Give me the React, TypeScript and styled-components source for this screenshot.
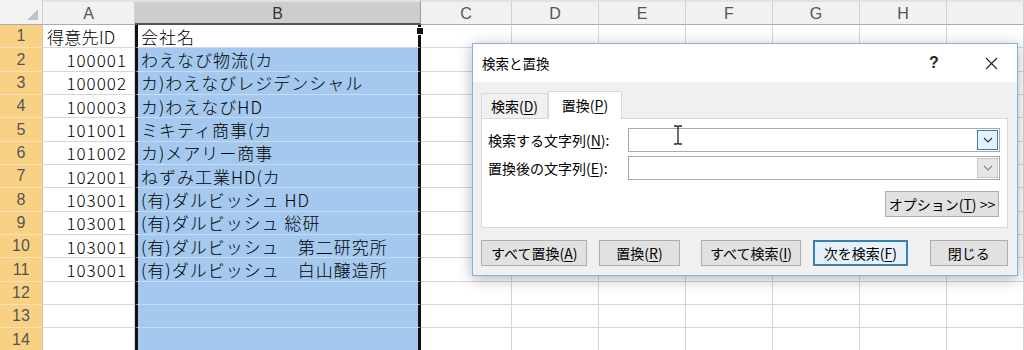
import React from 'react';
import styled, { createGlobalStyle } from 'styled-components';

const GlobalStyle = createGlobalStyle`
  html, body {
    margin: 0;
    padding: 0;
    background: #fff;
    overflow: hidden;
  }
`;

const COLS = ['A', 'B', 'C', 'D', 'E', 'F', 'G', 'H', ''];

const DATA: [string, string][] = [
  ['得意先ID', '会社名'],
  ['100001', 'わえなび物流(カ'],
  ['100002', 'カ)わえなびレジデンシャル'],
  ['100003', 'カ)わえなびHD'],
  ['101001', 'ミキティ商事(カ'],
  ['101002', 'カ)メアリー商事'],
  ['102001', 'ねずみ工業HD(カ'],
  ['103001', '(有)ダルビッシュ HD'],
  ['103001', '(有)ダルビッシュ 総研'],
  ['103001', '(有)ダルビッシュ　第二研究所'],
  ['103001', '(有)ダルビッシュ　白山醸造所'],
  ['', ''],
  ['', ''],
  ['', ''],
];

export default function App() {
  return (
    <Page>
      <GlobalStyle />
      <Sheet>
        <Corner />
        {COLS.map((c, i) => (
          <ColHead key={'h' + i} $sel={c === 'B'}>{c}</ColHead>
        ))}
        {DATA.map(([a, b], r) => (
          <React.Fragment key={r}>
            <RowHead>{r + 1}</RowHead>
            <Cell $right={r > 0}>{a}</Cell>
            <BCell $active={r === 0}>
              {b}
              {r === 0 && <FillHandle />}
            </BCell>
            {COLS.slice(2).map((_, i) => (
              <Cell key={i} />
            ))}
          </React.Fragment>
        ))}
      </Sheet>

      <Dialog>
        <TitleBar>
          <Title>検索と置換</Title>
          <TitleBtn $w={46}>?</TitleBtn>
          <TitleBtn $w={52} style={{ marginLeft: 8 }}>
            <svg width="13" height="13" viewBox="0 0 13 13">
              <path d="M1 1 L12 12 M12 1 L1 12" stroke="#222" strokeWidth="1.1" fill="none" />
            </svg>
          </TitleBtn>
        </TitleBar>

        <Body>
          <Tabs>
            <Tab $w={67}>検索(<u>D</u>)</Tab>
            <Tab $w={74} $active>置換(<u>P</u>)</Tab>
          </Tabs>
          <Panel>
            <Field>
              <Label>検索する文字列(<u>N</u>):</Label>
              <Input>
                <IBeam width="10" height="20" viewBox="0 0 10 20">
                  <path d="M1 1 H4 Q5 1 5 3 V17 Q5 19 4 19 H1 M9 1 H6 Q5 1 5 3 M5 17 Q5 19 6 19 H9" stroke="#222" strokeWidth="1.3" fill="none" />
                </IBeam>
                <Drop $focus>
                  <Chevron color="#333" />
                </Drop>
              </Input>
            </Field>
            <Field>
              <Label>置換後の文字列(<u>E</u>):</Label>
              <Input>
                <Drop>
                  <Chevron color="#8a8a8a" />
                </Drop>
              </Input>
            </Field>
            <OptionRow>
              <Button $w={114}>オプション(<u>T</u>) &gt;&gt;</Button>
            </OptionRow>
          </Panel>
          <ButtonRow>
            <Button $w={107}>すべて置換(<u>A</u>)</Button>
            <Button $w={81} $ml={12}>置換(<u>R</u>)</Button>
            <Button $w={101} $ml={21}>すべて検索(<u>I</u>)</Button>
            <Button $w={95} $ml={12} $default>次を検索(<u>F</u>)</Button>
            <Button $w={79} $ml={22}>閉じる</Button>
          </ButtonRow>
        </Body>
      </Dialog>
    </Page>
  );
}

function Chevron({ color }: { color: string }) {
  return (
    <svg width="10" height="6" viewBox="0 0 10 6">
      <path d="M1 1 L5 5 L9 1" stroke={color} strokeWidth="1.2" fill="none" />
    </svg>
  );
}

const Page = styled.div`
  position: relative;
  width: 1024px;
  height: 350px;
  overflow: hidden;
`;

const Sheet = styled.div`
  display: grid;
  grid-template-columns: 43px 92px 286px 91px 87px 87px 87px 87px 87px 1fr;
  grid-template-rows: 25px repeat(14, 23.35px);
  width: 1024px;
  font-family: 'Noto Sans CJK JP', sans-serif;
`;

const Corner = styled.div`
  position: relative;
  box-sizing: border-box;
  background: #f3f3f3;
  border-right: 1px solid #cfcfcf;
  border-bottom: 1px solid #ababab;

  &::after {
    content: '';
    position: absolute;
    right: 4px;
    bottom: 4px;
    border-left: 11px solid transparent;
    border-bottom: 11px solid #c4c4c4;
  }
`;

const ColHead = styled.div<{ $sel?: boolean }>`
  box-sizing: border-box;
  display: flex;
  align-items: center;
  justify-content: center;
  padding-top: 2px;
  font-family: 'Liberation Sans', sans-serif;
  font-size: 16px;
  color: ${({ $sel }) => ($sel ? '#333' : '#555')};
  background: ${({ $sel }) => ($sel ? '#cdcdcd' : '#f1f1f1')};
  border-right: 1px solid ${({ $sel }) => ($sel ? '#9a9a9a' : '#d2d2d2')};
  border-bottom: ${({ $sel }) => ($sel ? '2px solid #555' : '1px solid #ababab')};
  border-top: 2px solid #e2e2e2;
`;

const RowHead = styled.div`
  box-sizing: border-box;
  display: flex;
  align-items: center;
  justify-content: center;
  font-family: 'Liberation Sans', sans-serif;
  font-size: 16px;
  color: #555;
  background: #f9d185;
  border-right: 1px solid #c9c9c9;
  border-bottom: 1px solid #f6e2b8;
`;

const Cell = styled.div<{ $right?: boolean }>`
  box-sizing: border-box;
  display: flex;
  align-items: center;
  justify-content: ${({ $right }) => ($right ? 'flex-end' : 'flex-start')};
  padding: 0 7px 0 4px;
  font-size: 17px;
  font-weight: 300;
  letter-spacing: ${({ $right }) => ($right ? 1 : 0.3)}px;
  color: #000;
  white-space: nowrap;
  border-right: 1px solid #d6d6d6;
  border-bottom: 1px solid #d6d6d6;
`;

const BCell = styled.div<{ $active?: boolean }>`
  position: relative;
  box-sizing: border-box;
  display: flex;
  align-items: center;
  padding-left: 3px;
  font-size: 17px;
  font-weight: 300;
  letter-spacing: 1px;
  color: #000;
  white-space: nowrap;
  background: ${({ $active }) => ($active ? '#fff' : '#a4c8ee')};
  border-left: 3px solid #111;
  border-right: 3px solid #111;
  border-bottom: 1px solid ${({ $active }) => ($active ? '#d6d6d6' : '#c6dcf4')};
`;

const FillHandle = styled.span`
  position: absolute;
  right: -6px;
  top: 2px;
  width: 6px;
  height: 6px;
  background: #111;
  border: 1px solid #fff;
`;

const Dialog = styled.div`
  position: absolute;
  left: 472px;
  top: 43px;
  width: 546px;
  height: 233px;
  box-sizing: border-box;
  display: flex;
  flex-direction: column;
  background: #f0f0f0;
  border: 1px solid #86b1df;
  box-shadow: 0 3px 14px rgba(0, 0, 0, 0.3);
  font-family: 'Noto Sans CJK JP', sans-serif;
  font-size: 14px;
  color: #000;

  u {
    text-decoration-thickness: 1px;
    text-underline-offset: 2px;
  }
`;

const TitleBar = styled.div`
  height: 38px;
  display: flex;
  align-items: center;
  padding-left: 9px;
  background: #fff;
`;

const Title = styled.span`
  flex: 1;
  font-size: 13.5px;
`;

const TitleBtn = styled.span<{ $w: number }>`
  width: ${({ $w }) => $w}px;
  height: 100%;
  display: flex;
  align-items: center;
  justify-content: center;
  font-family: 'Liberation Sans', sans-serif;
  font-size: 16px;
  font-weight: bold;
  color: #222;
`;

const Body = styled.div`
  padding: 9px 9px 0 8px;
`;

const Tabs = styled.div`
  display: flex;
  align-items: flex-end;
  height: 27px;
`;

const Tab = styled.div<{ $w: number; $active?: boolean }>`
  position: relative;
  z-index: ${({ $active }) => ($active ? 1 : 0)};
  box-sizing: border-box;
  width: ${({ $w }) => $w}px;
  height: ${({ $active }) => ($active ? 28 : 25)}px;
  margin-bottom: ${({ $active }) => ($active ? -1 : 0)}px;
  display: flex;
  align-items: center;
  justify-content: center;
  padding-bottom: ${({ $active }) => ($active ? 2 : 0)}px;
  background: ${({ $active }) => ($active ? '#fff' : '#f0f0f0')};
  border: 1px solid #d9d9d9;
  border-bottom: none;
`;

const Panel = styled.div`
  box-sizing: border-box;
  height: 110px;
  display: flex;
  flex-direction: column;
  gap: 4px;
  padding: 9px 7px 0 6px;
  background: #fff;
  border: 1px solid #d9d9d9;
`;

const Field = styled.div`
  display: flex;
  align-items: center;
  height: 24px;
`;

const Label = styled.span`
  width: 140px;
  white-space: nowrap;
`;

const Input = styled.div`
  position: relative;
  flex: 1;
  height: 24px;
  box-sizing: border-box;
  display: flex;
  justify-content: flex-end;
  background: #fff;
  border: 1px solid #a9a9a9;
`;

const IBeam = styled.svg`
  position: absolute;
  left: 44px;
  top: -4px;
`;

const Drop = styled.div<{ $focus?: boolean }>`
  width: 21px;
  box-sizing: border-box;
  display: flex;
  align-items: center;
  justify-content: center;
  margin: 1px;
  background: ${({ $focus }) => ($focus ? '#e5f1fb' : '#e6e6e6')};
  border: 1px solid ${({ $focus }) => ($focus ? '#3c7fb1' : '#c9c9c9')};
`;

const OptionRow = styled.div`
  display: flex;
  justify-content: flex-end;
  margin-top: 7px;
  padding-right: 1px;
`;

const ButtonRow = styled.div`
  display: flex;
  margin-top: 12px;
`;

const Button = styled.div<{ $w: number; $ml?: number; $default?: boolean }>`
  width: ${({ $w }) => $w}px;
  margin-left: ${({ $ml }) => $ml || 0}px;
  height: 26px;
  box-sizing: border-box;
  display: flex;
  align-items: center;
  justify-content: center;
  white-space: nowrap;
  background: ${({ $default }) => ($default ? '#e5f1fb' : '#e1e1e1')};
  border: 1px solid ${({ $default }) => ($default ? '#3c7fb1' : '#adadad')};
  box-shadow: ${({ $default }) => ($default ? 'inset 0 0 0 1px #3c7fb1' : 'none')};
`;
